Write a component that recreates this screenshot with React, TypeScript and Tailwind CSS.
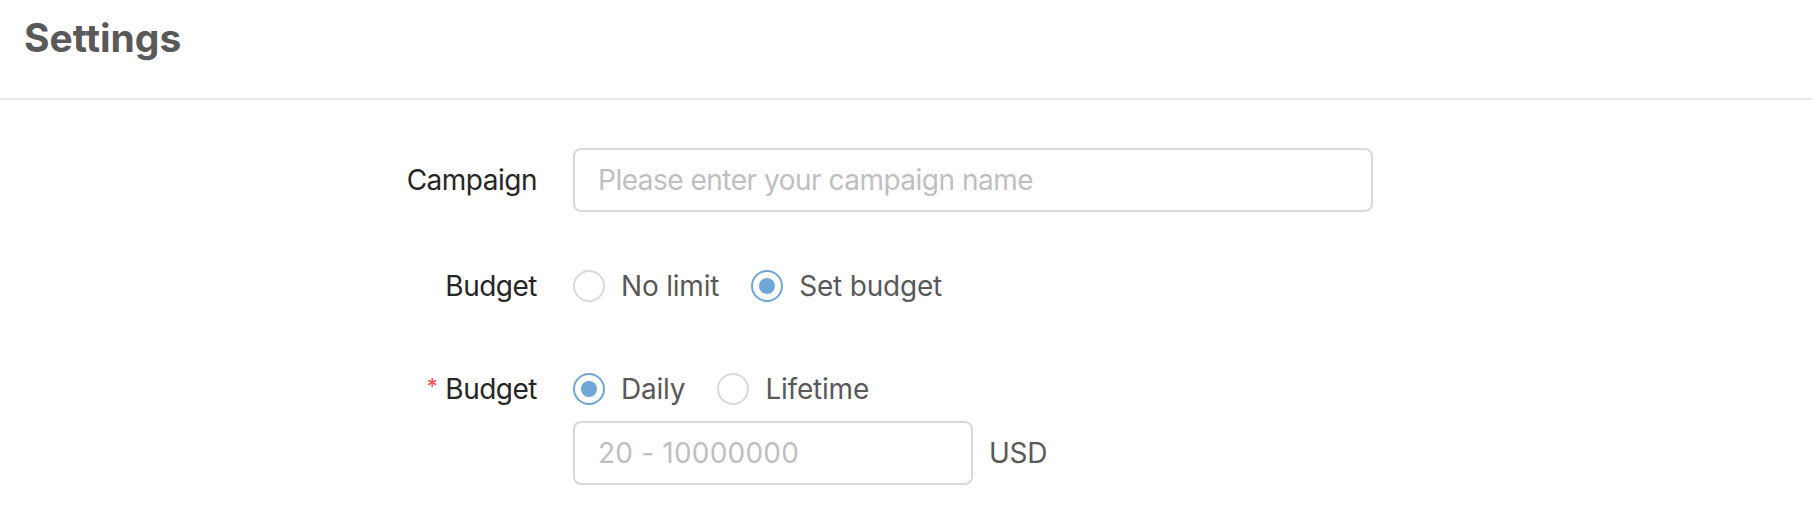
import React from "react";

const font = { fontFamily: '"Inter", "Noto Sans", "Liberation Sans", sans-serif' };

function Radio({ checked, label }: { checked: boolean; label: string }) {
  return (
    <label className="flex items-center cursor-pointer mr-[16px]">
      <span
        className={
          "w-[32px] h-[32px] rounded-full border-2 flex items-center justify-center bg-white " +
          (checked ? "border-[#6fa6d8]" : "border-[#d9d9d9]")
        }
      >
        {checked && <span className="w-[16px] h-[16px] rounded-full bg-[#6fa6d8]" />}
      </span>
      <span className="pl-[16px] pr-[16px] text-[28px] tracking-[-0.2px] leading-[64px] text-[#595959]">{label}</span>
    </label>
  );
}

export default function App() {
  return (
    <div className="w-[1812px] h-[520px] bg-white" style={font}>
      <div className="h-[100px] border-b-2 border-[#e8e8e8] pl-[24px] pt-[14px]">
        <h1 className="text-[39px] leading-[48px] font-bold text-[#595959]">Settings</h1>
      </div>

      <div className="pt-[48px]">
        {/* Campaign */}
        <div className="flex items-center h-[64px]">
          <div className="w-[537px] text-right text-[28px] tracking-[-0.5px] text-[#262626]">Campaign</div>
          <div className="ml-[36px] w-[800px] h-[64px] border-2 border-[#d9d9d9] rounded-[8px] flex items-center px-[23px]">
            <span className="text-[28px] tracking-[-0.5px] text-[#bfbfbf]">Please enter your campaign name</span>
          </div>
        </div>

        {/* Budget radio */}
        <div className="flex items-center h-[64px] mt-[42px]">
          <div className="w-[537px] text-right text-[28px] tracking-[-0.5px] text-[#262626]">Budget</div>
          <div className="ml-[36px] flex items-center">
            <Radio checked={false} label="No limit" />
            <Radio checked={true} label="Set budget" />
          </div>
        </div>

        {/* Budget required */}
        <div className="flex mt-[39px]">
          <div className="w-[537px] h-[64px] flex items-center justify-end text-[28px] tracking-[-0.5px] text-[#262626]">
            <span className="text-[#ff4d4f] text-[22px] leading-none mr-[8px] -mt-[6px]">*</span>
            <span>Budget</span>
          </div>
          <div className="ml-[36px] flex flex-col">
            <div className="flex items-center h-[64px]">
              <Radio checked={true} label="Daily" />
              <Radio checked={false} label="Lifetime" />
            </div>
            <div className="flex items-center">
              <div className="w-[400px] h-[64px] border-2 border-[#d9d9d9] rounded-[8px] flex items-center px-[23px]">
                <span className="text-[28px] tracking-[0.2px] text-[#bfbfbf]">20 - 10000000</span>
              </div>
              <span className="ml-[16px] text-[28px] tracking-[-0.3px] text-[#595959]">USD</span>
            </div>
          </div>
        </div>
      </div>
    </div>
  );
}
